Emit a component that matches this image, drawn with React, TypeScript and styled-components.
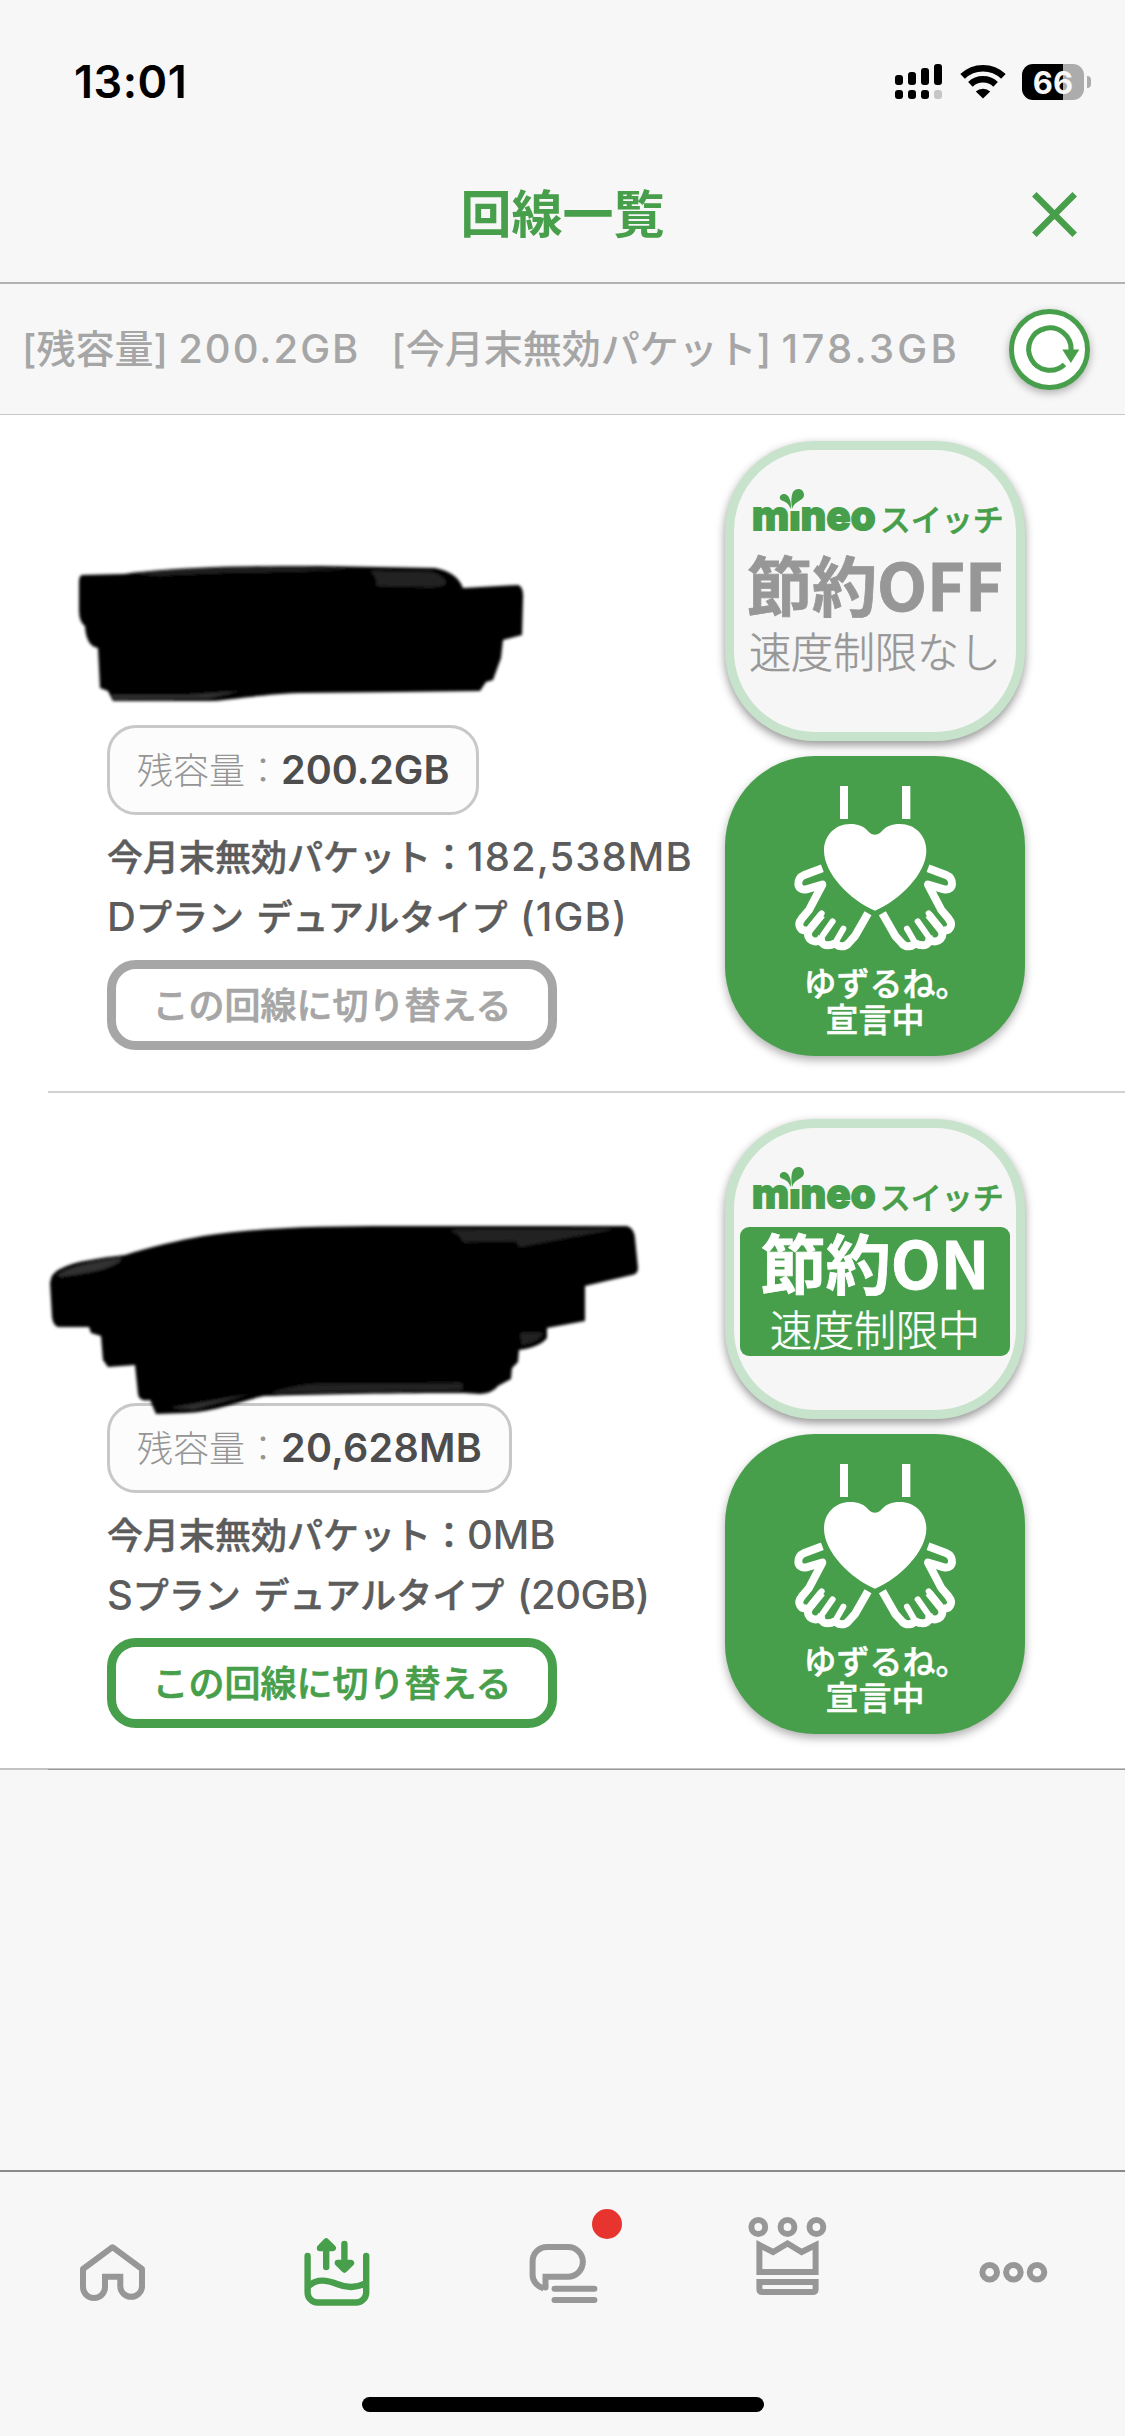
import React from 'react';
import styled, { createGlobalStyle } from 'styled-components';

const green = '#489f4b';
const gray = '#979797';
const sans = '"Inter", "Noto Sans CJK JP", sans-serif';
const cjk = '"Noto Sans CJK JP", sans-serif';

const GlobalStyle = createGlobalStyle`
  * { box-sizing: border-box; }
  body { margin: 0; background: #f7f7f7; }
`;

const Screen = styled.div`
  width: 1125px;
  height: 2436px;
  display: flex;
  flex-direction: column;
  background: #f7f7f7;
  font-family: ${sans};
  overflow: hidden;
`;

const StatusBar = styled.div`
  height: 132px;
  padding: 32px 34px 0 74px;
  display: flex;
  justify-content: space-between;
  align-items: flex-start;
`;

const Clock = styled.div`
  margin-top: 25px;
  font-size: 45px;
  line-height: 50px;
  font-weight: 600;
  letter-spacing: 0.5px;
  color: #000;
`;

const StatusIcons = styled.div`
  height: 36px;
  margin-top: 32px;
  display: flex;
  align-items: center;
`;

const SignalSvg = styled.svg`
  margin-right: 18px;
`;

const WifiSvg = styled.svg`
  margin-right: 16px;
`;

const Battery = styled.div`
  width: 62px;
  height: 36px;
  border-radius: 11px;
  background: linear-gradient(90deg, #000 0 41px, #acacac 41px);
  color: #f7f7f7;
  font-size: 31px;
  line-height: 37px;
  font-weight: 700;
  text-align: center;
`;

const BatteryTip = styled.div`
  width: 4px;
  height: 12px;
  margin-left: 3px;
  border-radius: 0 5px 5px 0;
  background: #acacac;
`;

const Header = styled.header`
  height: 152px;
  border-bottom: 2px solid #b2b2b2;
  display: grid;
  grid-template-columns: 120px 1fr 120px;
  align-items: center;
  padding: 12px 0 0;
`;

const Title = styled.h1`
  grid-column: 2;
  margin: 0 0 4px;
  font-family: ${cjk};
  font-size: 51px;
  line-height: 60px;
  font-weight: 700;
  color: ${green};
  text-align: center;
`;

const CloseButton = styled.button`
  border: 0;
  padding: 0;
  background: none;
  width: 45px;
  height: 45px;
  margin: 3px 0 0 27px;
  svg { display: block; }
`;

const Summary = styled.div`
  height: 131px;
  padding: 0 35px 0 22px;
  display: flex;
  align-items: center;
  justify-content: space-between;
  border-bottom: 1px solid #c8c8c8;
`;

const SummaryText = styled.div`
  display: flex;
  gap: 31px;
  font-size: 39px;
  line-height: 60px;
  font-weight: 500;
  color: #a6a6a6;
  white-space: pre;
`;

const RefreshButton = styled.button`
  width: 81px;
  height: 81px;
  padding: 0;
  border: 5px solid ${green};
  border-radius: 50%;
  background: #fff;
  box-shadow: 0 3px 8px rgba(0, 0, 0, 0.3);
  svg { display: block; }
`;

const LineList = styled.main`
  background: #fff;
  border-bottom: 1px solid #c4c4c4;
`;

const LineItem = styled.section`
  height: 676px;
  display: flex;

  &:last-child { height: 675px; }
`;

const Divider = styled.div`
  height: 2px;
  margin-left: 48px;
  background: #d2d2d2;
`;

const ListEnd = styled.div`
  height: 1px;
  background: linear-gradient(90deg, #c4c4c4 0 48px, #999 48px);
`;

const Details = styled.div`
  width: 725px;
  padding-left: 107px;
  display: flex;
  flex-direction: column;
  align-items: flex-start;
`;

const NameSlot = styled.div`
  position: relative;
  z-index: 1;
  width: 618px;
  height: 310px;
`;

const Marker = styled.svg`
  position: absolute;
  left: -107px;
  top: 0;
  overflow: visible;
`;

const RemainPill = styled.div`
  height: 90px;
  padding: 0 27px;
  display: flex;
  align-items: center;
  border: 3px solid #c8c8c8;
  border-radius: 29px;
  background: #fcfcfc;
  white-space: nowrap;
`;

const RemainLabel = styled.span`
  margin-bottom: 5px;
  font-size: 36px;
  font-weight: 300;
  color: #959595;
`;

const RemainValue = styled.span<{ $track: number }>`
  margin-bottom: 1px;
  font-size: 39.5px;
  font-weight: 600;
  letter-spacing: ${(p) => p.$track}px;
  color: #4d4d4d;
`;

const Info = styled.div`
  margin: 13px 0 12px;
  display: flex;
  flex-direction: column;
  font-size: 36px;
  line-height: 60px;
  font-weight: 500;
  color: #5c5c5c;
  white-space: pre;
  word-spacing: 3px;
  -webkit-text-stroke: 0.5px currentColor;
`;

const Latin = styled.span<{ $track?: number }>`
  font-size: 40px;
  line-height: 0;
  letter-spacing: ${(p) => p.$track ?? 0}px;
  -webkit-text-stroke: 0;
`;

const SwitchButton = styled.button<{ $active?: boolean }>`
  width: 450px;
  height: 90px;
  padding: 0 0 5px;
  border: 9px solid ${(p) => (p.$active ? green : '#a6a6a6')};
  border-radius: 29px;
  background: #fff;
  color: ${(p) => (p.$active ? green : '#a6a6a6')};
  font-family: ${cjk};
  font-size: 36px;
  line-height: 60px;
  font-weight: 500;
  -webkit-text-stroke: 0.7px currentColor;
`;

const Tiles = styled.div`
  padding-top: 26px;
  display: flex;
  flex-direction: column;
  gap: 15px;
`;

const SwitchTile = styled.div`
  width: 300px;
  height: 300px;
  border: 9px solid #c8e3cc;
  border-radius: 90px;
  background: #f6f6f6;
  box-shadow: 0 4px 10px rgba(0, 0, 0, 0.42);
  display: flex;
  flex-direction: column;
  align-items: center;
`;

const Brand = styled.div`
  position: relative;
  height: 99px;
  width: 252px;
  padding: 33px 0 0 3px;
  display: flex;
  align-items: center;
  color: ${green};
  white-space: nowrap;
`;

const Mineo = styled.span`
  width: 124px;
  font-family: "Inter", sans-serif;
  font-size: 40px;
  line-height: 42px;
  font-weight: 800;
  letter-spacing: 0.2px;
  -webkit-text-stroke: 2px ${green};
  stroke-linejoin: round;
`;

const Stem = styled.span`
  display: inline-block;
  clip-path: inset(16px -2px -2px -2px);
`;

const Leaves = styled.svg`
  position: absolute;
  left: 30px;
  top: 38px;
`;

const Kana = styled.span`
  margin: 3px 0 0 4px;
  font-family: ${cjk};
  font-size: 31px;
  line-height: 40px;
  font-weight: 500;
  -webkit-text-stroke: 0.6px ${green};
`;

const Mode = styled.div<{ $on?: boolean }>`
  width: 270px;
  height: 129px;
  padding-top: 1px;
  border-radius: 9px;
  background: ${(p) => (p.$on ? green : 'transparent')};
  color: ${(p) => (p.$on ? '#fff' : gray)};
  display: flex;
  flex-direction: column;
  align-items: center;
  font-family: ${cjk};
  white-space: nowrap;
`;

const ModeTitle = styled.div`
  font-size: 65px;
  line-height: 66px;
  font-weight: 700;
  -webkit-text-stroke: 0.8px currentColor;
`;

const ModeNote = styled.div`
  margin-top: 11px;
  font-size: 42px;
  line-height: 46px;
  font-weight: 300;
  -webkit-text-stroke: 0.5px currentColor;
`;

const GiveTile = styled.div`
  width: 300px;
  height: 300px;
  border-radius: 90px;
  background: ${green};
  box-shadow: 0 4px 10px rgba(0, 0, 0, 0.32);
  display: flex;
  flex-direction: column;
  align-items: center;
  color: #fff;
  font-family: ${cjk};
  font-size: 33px;
  line-height: 36px;
  font-weight: 500;
  -webkit-text-stroke: 0.5px #fff;
`;

const GiveArt = styled.svg`
  display: block;
  margin-bottom: 5px;
`;

const GiveName = styled.div`
  padding-left: 22px;
`;

const TabBar = styled.nav`
  margin-top: auto;
  height: 266px;
  border-top: 2px solid #8a8a8a;
  display: flex;
  flex-direction: column;
  align-items: center;
`;

const Tabs = styled.div`
  width: 100%;
  height: 225px;
  display: grid;
  grid-template-columns: repeat(5, 1fr);
  justify-items: center;
`;

const Tab = styled.div`
  position: relative;
  width: 120px;
  height: 120px;
  margin-top: 28px;
`;

const Badge = styled.span`
  position: absolute;
  left: 89px;
  top: 9px;
  width: 30px;
  height: 30px;
  border-radius: 50%;
  background: #e8342f;
`;

const HomeIndicator = styled.div`
  width: 402px;
  height: 15px;
  border-radius: 8px;
  background: #000;
`;

const Signal = () => (
  <SignalSvg width="47" height="36" viewBox="0 0 47 36">
    {[11, 8, 4, 0].map((top, i) => (
      <g key={top}>
        <rect x={i * 13} y={top} width="8" height={21 - top} rx="3" />
        <rect x={i * 13} y="26" width="8" height="9" rx="3" fill={i === 3 ? '#c6c6c6' : '#000'} />
      </g>
    ))}
  </SignalSvg>
);

const Wifi = () => (
  <WifiSvg width="46" height="36" viewBox="0 0 46 36">
    <g fill="none" stroke="#000" strokeWidth="6.6">
      <path d="M2.6 12.4A29.5 29.5 0 0 1 43.4 12.4" />
      <path d="M10.4 20.3A18.3 18.3 0 0 1 35.6 20.3" />
    </g>
    <path d="M15.8 27.6A10.4 10.4 0 0 1 30.2 27.6L23 34.4Z" />
  </WifiSvg>
);

const Close = () => (
  <svg width="45" height="45" viewBox="0 0 45 45" stroke={green} strokeWidth="6.4">
    <path d="M2.3 2.3L42.7 42.7M42.7 2.3L2.3 42.7" />
  </svg>
);

const Refresh = () => (
  <svg width="71" height="71" viewBox="0 0 71 71">
    <path d="M50.5 50.5A21.2 21.2 0 1 1 57.1 36" fill="none" stroke={green} strokeWidth="5" />
    <path d="M48.3 35.6H65.3L56.8 49Z" fill={green} />
  </svg>
);

const Hand = () => (
  <g transform="translate(255 360)">
    <path d="M112 25L58 45C32 55 34 94 64 88L112 74L72 150L50 176C34 196 48 216 68 210" />
    <path d="M110 164L76 206C56 230 82 254 106 240" />
    <path d="M143 184L112 228" strokeLinecap="round" strokeWidth="18" />
    <path d="M110 160L76 202" strokeLinecap="round" strokeWidth="18" />
    <path d="M175 206L152 246" strokeLinecap="round" strokeWidth="18" />
    <path d="M110 230C100 250 122 264 150 250" />
    <path d="M150 244C156 264 180 262 190 250L210 228L249 160" />
  </g>
);

const Hands = () => (
  <GiveArt width="300" height="203" viewBox="75 48 900 609">
    <path fill="#fff" d="M420 138h24v99h-24zM606 138h25v99h-25z" />
    <path
      fill="#fff"
      d="M525 512C450 480 372 400 372 332C372 286 406 252 450 252C504 252 500 284 525 284C550 284 546 252 600 252C645 252 679 286 679 332C679 400 600 480 525 512Z"
    />
    <g fill="none" stroke="#fff" strokeWidth="24" strokeLinejoin="round">
      <Hand />
    </g>
    <g transform="translate(1051 0) scale(-1 1)" fill="none" stroke="#fff" strokeWidth="24" strokeLinejoin="round">
      <Hand />
    </g>
  </GiveArt>
);

const HomeIcon = () => (
  <svg width="120" height="120" viewBox="0 0 120 120" fill="none" stroke={gray} strokeWidth="6">
    <path strokeLinejoin="round" d="M52 87A11 11 0 0 1 30 87V69L59.5 47.2L89 69V87A10.9 10.9 0 0 1 67.3 87" />
    <path d="M52 87.2V76.7H67.3V87.2M52 76.7H49" />
  </svg>
);

const DataIcon = () => (
  <svg
    width="120"
    height="120"
    viewBox="0 0 120 120"
    fill="none"
    stroke={green}
    strokeWidth="6.4"
    strokeLinecap="round"
    strokeLinejoin="round"
  >
    <path d="M29.6 56V92.5A10 10 0 0 0 39.6 102.5H78.2A10 10 0 0 0 88.2 92.5V56" />
    <path d="M31 85.5C39 78.5 48 79.5 59 84S78 88 87 83.5" />
    <path d="M48.2 67V43M42 48L48.2 41.5L54.8 48Z" />
    <path d="M66.4 44V69M59.8 63L66.4 69.5L73 63Z" />
  </svg>
);

const ChatIcon = () => (
  <svg width="120" height="120" viewBox="0 0 120 120" fill="none" stroke={gray} strokeWidth="6">
    <path d="M42.5 87V76.7H65A14.85 14.85 0 0 0 65 47H44A14.4 14.4 0 0 0 29.6 61.4V75C29.6 81 34 86.5 40.5 88.3" />
    <circle cx="42.5" cy="87.6" r="3" fill={gray} stroke="none" />
    <path strokeLinecap="round" d="M51.5 88.7H91.4M51.5 100H91.4" />
  </svg>
);

const CrownIcon = () => (
  <svg width="120" height="120" viewBox="0 0 120 120" fill="none" stroke={gray} strokeWidth="6">
    <circle cx="30.3" cy="27" r="6.9" />
    <circle cx="59.5" cy="27" r="6.9" />
    <circle cx="88.4" cy="27" r="6.9" />
    <path d="M31.4 71.9V45L45.1 52L59.5 43.5L73.6 52L87.6 45V71.9Z" />
    <path d="M31.4 82H87.6V89Q87.6 92 84.6 92H34.4Q31.4 92 31.4 89Z" />
  </svg>
);

const MoreIcon = () => (
  <svg width="120" height="120" viewBox="0 0 120 120" fill="none" stroke={gray} strokeWidth="6">
    <circle cx="36.7" cy="72.3" r="7.3" />
    <circle cx="60.4" cy="72.3" r="7.3" />
    <circle cx="84" cy="72.3" r="7.3" />
  </svg>
);

const FirstMarker = () => (
  <Marker width="725" height="310" viewBox="0 415 725 310">
    <filter id="soft1"><feGaussianBlur stdDeviation="1.8" /></filter>
    <g filter="url(#soft1)">
      <path d="M82 575L124 574C180 566 250 566 321 566L435 568Q457 572 463 588L518 585Q524 587 523 600L522 635L503 640L501 658L493 680L486 682L480 691L400 692L300 693C250 695 230 701 205 701L113 701L108 691L100 688L98 648Q86 646 85 626Q79 622 79 610L79 582Q79 576 82 575Z" />
      <path fill="#242424" d="M377 571L432 572Q445 576 446 583Q444 587 430 587L377 586Q377 576 370 571Z" />
      <path fill="#303030" d="M112 695H185L240 691L210 698L114 699Z" />
      <path fill="#202020" d="M130 573C200 568 300 567 350 569C280 573 200 572 160 576Z" />
    </g>
  </Marker>
);

const SecondMarker = () => (
  <Marker width="725" height="310" viewBox="0 1093 725 310">
    <filter id="soft2"><feGaussianBlur stdDeviation="1.8" /></filter>
    <g filter="url(#soft2)">
      <path d="M50 1283Q51 1273 60 1269C75 1261 100 1258 125 1255C150 1247 180 1240 203 1236C260 1227 330 1226 390 1226L627 1226Q634 1228 635 1238L638 1268Q638 1274 632 1275L585 1286L585 1321L547 1328L547 1338Q540 1347 519 1350L518 1362L512 1368L511 1379L498 1386Q493 1393 480 1394L464 1393C400 1393 320 1394 264 1396C240 1401 215 1412 186 1413L156 1414L150 1400Q139 1402 138 1394L135 1365L108 1367L103 1360L101 1336L91 1333L89 1327L58 1327Q53 1325 52 1317Z" />
      <path fill="#242424" d="M450 1230L615 1229L520 1247L515 1241L463 1242Q460 1234 450 1230Z" />
      <path fill="#303030" d="M58 1275C70 1266 100 1260 122 1258C116 1270 80 1274 60 1277Z" />
      <path fill="#222" d="M315 1384L462 1383V1390L270 1393Q290 1386 315 1384Z" />
      <path fill="#333" d="M170 1408L250 1394L195 1409Z" />
      <path fill="#222" d="M520 1333H543Q540 1341 522 1345Z" />
    </g>
  </Marker>
);

const SwitchCard = ({ on, title, note }: { on?: boolean; title: string; note: string }) => (
  <SwitchTile>
    <Brand>
      <Leaves width="26" height="22" viewBox="0 0 26 22" fill={green}>
        <path d="M11.5 21C13 17 11 8 7 6.500C3 5 0 8 1 11C3.500 14 9 12.500 11.500 21Z" />
        <path d="M13 21C12 15 12 8 14 4C17 -1 25 0 25 7C25 13 16 12 13 21Z" />
      </Leaves>
      <Mineo>m<Stem>i</Stem>neo</Mineo>
      <Kana>スイッチ</Kana>
    </Brand>
    <Mode $on={on}>
      <ModeTitle>{title}</ModeTitle>
      <ModeNote>{note}</ModeNote>
    </Mode>
  </SwitchTile>
);

const GiveCard = () => (
  <GiveTile>
    <Hands />
    <GiveName>ゆずるね。</GiveName>
    <div>宣言中</div>
  </GiveTile>
);

export default function App() {
  return (
    <Screen>
      <GlobalStyle />
      <StatusBar>
        <Clock>13:01</Clock>
        <StatusIcons>
          <Signal />
          <Wifi />
          <Battery>66</Battery>
          <BatteryTip />
        </StatusIcons>
      </StatusBar>
      <Header>
        <Title>回線一覧</Title>
        <CloseButton aria-label="閉じる"><Close /></CloseButton>
      </Header>
      <Summary>
        <SummaryText>
          <span>[残容量] <Latin $track={2}>200.2GB</Latin></span>
          <span>[今月末無効パケット] <Latin $track={3.3}>178.3GB</Latin></span>
        </SummaryText>
        <RefreshButton aria-label="更新"><Refresh /></RefreshButton>
      </Summary>
      <LineList>
        <LineItem>
          <Details>
            <NameSlot><FirstMarker /></NameSlot>
            <RemainPill>
              <RemainLabel>残容量：</RemainLabel>
              <RemainValue $track={0}>200.2GB</RemainValue>
            </RemainPill>
            <Info>
              <span>今月末無効パケット：<Latin $track={1.1}>182,538MB</Latin></span>
              <span><Latin>D</Latin>プラン デュアルタイプ <Latin $track={1.1}>(1GB)</Latin></span>
            </Info>
            <SwitchButton>この回線に切り替える</SwitchButton>
          </Details>
          <Tiles>
            <SwitchCard title="節約OFF" note="速度制限なし" />
            <GiveCard />
          </Tiles>
        </LineItem>
        <Divider />
        <LineItem>
          <Details>
            <NameSlot><SecondMarker /></NameSlot>
            <RemainPill>
              <RemainLabel>残容量：</RemainLabel>
              <RemainValue $track={0.3}>20,628MB</RemainValue>
            </RemainPill>
            <Info>
              <span>今月末無効パケット：<Latin>0MB</Latin></span>
              <span><Latin>S</Latin>プラン デュアルタイプ <Latin $track={-0.6}>(20GB)</Latin></span>
            </Info>
            <SwitchButton $active>この回線に切り替える</SwitchButton>
          </Details>
          <Tiles>
            <SwitchCard on title="節約ON" note="速度制限中" />
            <GiveCard />
          </Tiles>
        </LineItem>
      </LineList>
      <ListEnd />
      <TabBar>
        <Tabs>
          <Tab><HomeIcon /></Tab>
          <Tab><DataIcon /></Tab>
          <Tab><ChatIcon /><Badge /></Tab>
          <Tab><CrownIcon /></Tab>
          <Tab><MoreIcon /></Tab>
        </Tabs>
        <HomeIndicator />
      </TabBar>
    </Screen>
  );
}
